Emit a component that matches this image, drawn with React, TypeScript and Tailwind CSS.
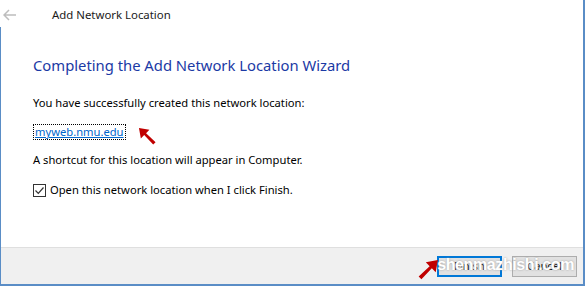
const font = { fontFamily: '"Segoe UI", "Noto Sans", "Liberation Sans", sans-serif' };

const RedArrow = ({ className, rotate }: { className: string; rotate: number }) => (
  <svg
    viewBox="0 0 20 20"
    className={className}
    style={{ transform: `rotate(${rotate}deg)` }}
  >
    <path d="M1 1 L12 3 L8.5 6.5 L18.5 16 L16 18.5 L6.5 8.5 L3 12 Z" fill="#c00000" />
  </svg>
);

const App = () => {
  return (
    <div className="w-[585px] h-[286px] bg-white flex overflow-hidden" style={font}>
      <div className="w-px flex flex-col">
        <div className="h-[27px] bg-white" />
        <div className="flex-1 bg-[#5a8dc6]" />
      </div>
      <div className="flex-1 flex flex-col border-r-2 border-b-2 border-[#5a8dc6]">
        <div className="h-[28px] flex items-center">
          <svg viewBox="0 0 14 12" className="w-[14px] h-[12px] ml-[2px] mt-[1px]">
            <path d="M1 6 H13 M6 1 L1 6 L6 11" stroke="#bdbdbd" strokeWidth="1.5" fill="none" />
          </svg>
          <span className="ml-[35px] text-[11.4px] text-[#1a1a1a] mt-[2px]">Add Network Location</span>
        </div>
        <div className="flex-1 pl-[32px] flex flex-col">
          <h1 className="mt-[27px] text-[14.8px] leading-[20px] text-[#1b3aa5]">
            Completing the Add Network Location Wizard
          </h1>
          <p className="mt-[20px] text-[11.2px] leading-[16px] text-black">
            You have successfully created this network location:
          </p>
          <div className="mt-[13px] h-[16px] flex items-start">
            <span className="text-[11.2px] leading-[14px] text-[#0066cc] underline border border-dotted border-black px-px">
              myweb.nmu.edu
            </span>
            <RedArrow className="w-[19px] h-[19px] ml-[12px] mt-[3px] shrink-0" rotate={0} />
          </div>
          <p className="mt-[12px] text-[11.2px] leading-[16px] text-black">
            A shortcut for this location will appear in Computer.
          </p>
          <label className="mt-[14px] flex items-center gap-[4px] text-[11.2px] leading-[16px] text-black">
            <span className="w-[13px] h-[13px] border border-[#333333] bg-white flex items-center justify-center">
              <svg viewBox="0 0 11 11" className="w-[11px] h-[11px]">
                <path d="M1.5 5.5 L4.3 8.3 L9.5 2.5" stroke="#333333" strokeWidth="1.2" fill="none" />
              </svg>
            </span>
            Open this network location when I click Finish.
          </label>
        </div>
        <div className="h-[37px] bg-[#f0f0f0] border-t border-[#dfdfdf] flex items-center justify-end pr-[6px] gap-[10px] relative">
          <RedArrow className="w-[22px] h-[22px] -mr-[12px] mt-[8px]" rotate={90} />
          <button className="w-[65px] h-[21px] bg-[#e1e1e1] border-2 border-[#0078d7] text-[11.2px] text-black">
            Finish
          </button>
          <button className="w-[65px] h-[21px] bg-[#e1e1e1] border border-[#adadad] text-[11.2px] text-black">
            Cancel
          </button>
          <span
            className="absolute right-[9px] top-[8px] text-[16px] leading-[18px] font-bold text-white tracking-tight"
            style={{ fontFamily: '"Liberation Sans", Arial, sans-serif', textShadow: "0 0 2px #999" }}
          >
            shenmazhishi.com
          </span>
        </div>
      </div>
    </div>
  );
};

export default App;
